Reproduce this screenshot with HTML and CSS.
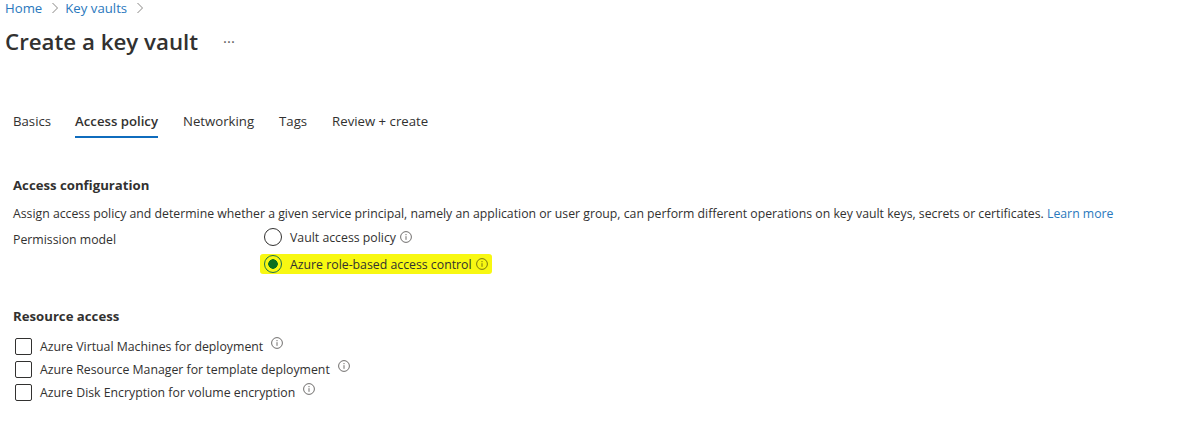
FILE: index.html
```html
<!DOCTYPE html>
<html lang="en">
<head>
    <meta charset="UTF-8">
    <title>Create a key vault</title>
    <link rel="stylesheet" href="styles.css">
</head>
<body>
    <nav class="breadcrumb">
        <a href="#">Home</a>
        <svg class="chevron" viewBox="0 0 8 12"><path d="M1.5 1l5 5-5 5"/></svg>
        <a href="#">Key vaults</a>
        <svg class="chevron" viewBox="0 0 8 12"><path d="M1.5 1l5 5-5 5"/></svg>
    </nav>

    <header class="title-row">
        <h1>Create a key vault</h1>
        <span class="more">···</span>
    </header>

    <div class="tabs">
        <span class="tab">Basics</span>
        <span class="tab active">Access policy</span>
        <span class="tab">Networking</span>
        <span class="tab">Tags</span>
        <span class="tab">Review + create</span>
    </div>

    <section class="access">
        <h2>Access configuration</h2>
        <p class="desc">Assign access policy and determine whether a given service principal, namely an application or user group, can perform different operations on key vault keys, secrets or certificates. <a href="#">Learn more</a></p>
        <div class="permission">
            <span class="permission-label">Permission model</span>
            <div class="radios">
                <div class="radio-row">
                    <span class="radio"></span>
                    <span>Vault access policy</span>
                    <svg class="info" viewBox="0 0 12 12"><circle cx="6" cy="6" r="5.4"/><path d="M6 5.2v3.6M6 3v1.2"/></svg>
                </div>
                <div class="radio-row selected">
                    <span class="radio checked"></span>
                    <span>Azure role-based access control</span>
                    <svg class="info" viewBox="0 0 12 12"><circle cx="6" cy="6" r="5.4"/><path d="M6 5.2v3.6M6 3v1.2"/></svg>
                </div>
            </div>
        </div>
    </section>

    <section class="resource">
        <h2>Resource access</h2>
        <div class="check-list">
            <div class="check-row">
                <span class="checkbox"></span>
                <span>Azure Virtual Machines for deployment</span>
                <svg class="info raised" viewBox="0 0 12 12"><circle cx="6" cy="6" r="5.4"/><path d="M6 5.2v3.6M6 3v1.2"/></svg>
            </div>
            <div class="check-row">
                <span class="checkbox"></span>
                <span>Azure Resource Manager for template deployment</span>
                <svg class="info raised" viewBox="0 0 12 12"><circle cx="6" cy="6" r="5.4"/><path d="M6 5.2v3.6M6 3v1.2"/></svg>
            </div>
            <div class="check-row">
                <span class="checkbox"></span>
                <span>Azure Disk Encryption for volume encryption</span>
                <svg class="info raised" viewBox="0 0 12 12"><circle cx="6" cy="6" r="5.4"/><path d="M6 5.2v3.6M6 3v1.2"/></svg>
            </div>
        </div>
    </section>
</body>
</html>
```

FILE: styles.css
```css
* {
    box-sizing: border-box;
}

body {
    margin: 0;
    height: 431px;
    overflow: hidden;
    background: #fff;
    color: #323130;
    font-family: "Open Sans", "Liberation Sans", sans-serif;
    font-size: 12.3px;
}

a {
    color: #2a78bd;
    text-decoration: none;
}

/* Breadcrumb */
.breadcrumb {
    display: flex;
    align-items: center;
    height: 16px;
    padding-left: 5px;
    font-size: 13.2px;
}

.chevron {
    width: 8px;
    height: 12px;
    margin: 0 6px 0 9px;
    fill: none;
    stroke: #8a8886;
    stroke-width: 1;
}

/* Title */
.title-row {
    display: flex;
    align-items: center;
    height: 34px;
    margin-top: 8px;
    padding-left: 5px;
}

h1 {
    margin: 0;
    font-size: 22.3px;
    font-weight: 600;
}

.more {
    margin-left: 25px;
    font-size: 15px;
    color: #605e5c;
}

/* Tabs */
.tabs {
    display: flex;
    gap: 25px;
    height: 35px;
    margin-top: 45px;
    padding-left: 13px;
    font-size: 13.2px;
}

.tab {
    padding-top: 9px;
}

.tab.active {
    margin-left: -1px;
    border-bottom: 2px solid #0f6cbd;
    font-weight: 600;
}

/* Sections */
h2 {
    margin: 0;
    font-size: 13.2px;
    line-height: 18px;
    font-weight: 700;
}

.access {
    padding: 38px 0 0 13px;
}

.desc {
    margin: 11px 0 0;
    line-height: 18px;
    white-space: nowrap;
    font-size: 12.27px;
}

.permission {
    display: grid;
    grid-template-columns: 251px 1fr;
    margin-top: 5px;
}

.permission-label {
    padding-top: 3px;
}

.radios {
    display: flex;
    flex-direction: column;
    gap: 9px;
}

.radio-row {
    display: flex;
    align-items: center;
    gap: 8px;
    height: 18px;
}

.radio-row .info {
    margin-left: -4px;
}

.radio-row.selected {
    width: 232px;
    height: 20px;
    margin: -1px 0 0 -4px;
    padding-left: 4px;
    background: #f8f812;
    border-radius: 3px;
}

.radio {
    flex: none;
    width: 18px;
    height: 18px;
    border: 1.5px solid #323130;
    border-radius: 50%;
}

.radio.checked {
    border-color: #1d6f4a;
    background: radial-gradient(circle, #0b6e1f 0 4.5px, transparent 5px);
}

.info {
    flex: none;
    width: 12px;
    height: 12px;
    fill: none;
    stroke: #605e5c;
    stroke-width: 0.9;
}

.selected .info {
    stroke: #6b6a10;
}

.resource {
    padding: 33px 0 0 13px;
}

.check-list {
    display: flex;
    flex-direction: column;
    gap: 6px;
    margin-top: 13px;
    padding-left: 2px;
}

.check-row {
    display: flex;
    align-items: center;
    height: 17px;
    gap: 8px;
}

.checkbox {
    flex: none;
    width: 17px;
    height: 17px;
    border: 1px solid #323130;
    border-radius: 2px;
}

.info.raised {
    margin: -7px 0 0 0;
}
```
